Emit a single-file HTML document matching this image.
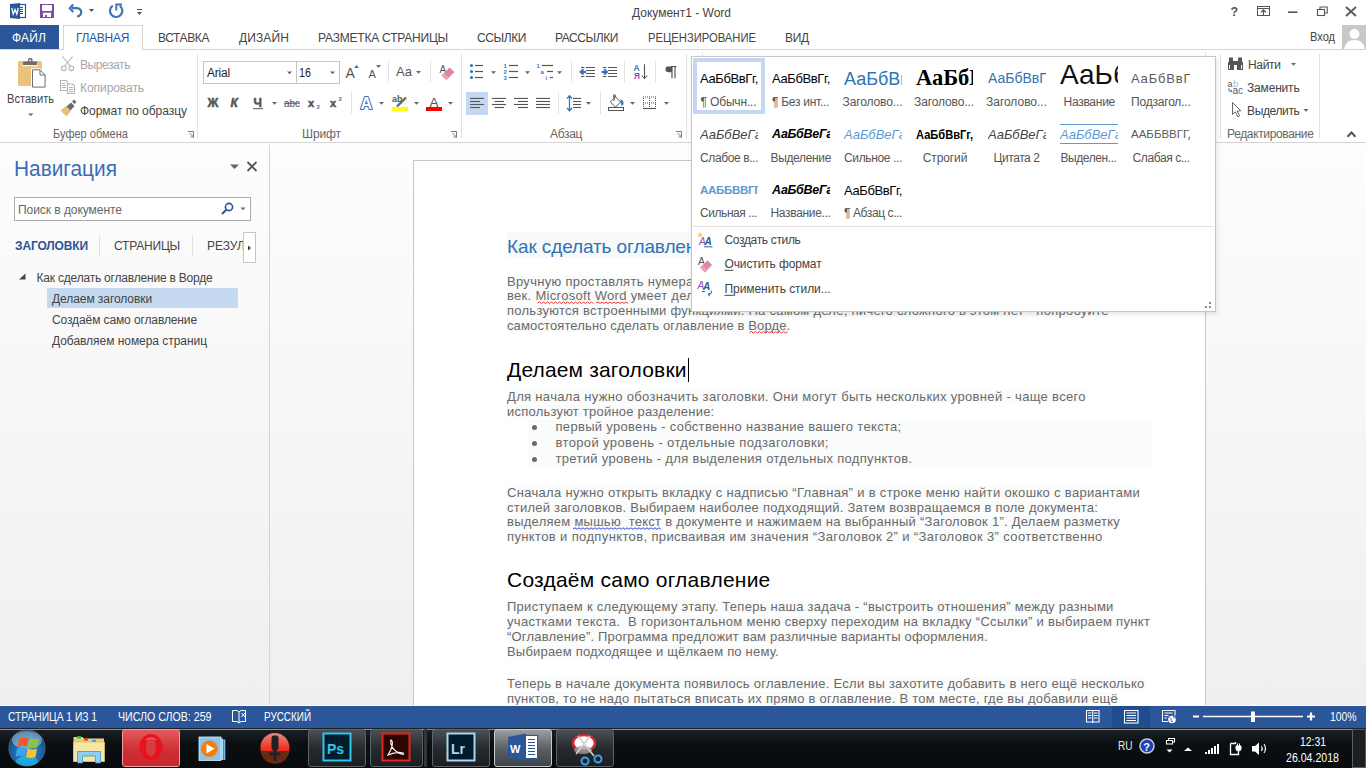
<!DOCTYPE html>
<html><head><meta charset="utf-8"><title>Word</title>
<style>
*{margin:0;padding:0;box-sizing:border-box}
html,body{width:1366px;height:768px;overflow:hidden;background:#fff;font-family:"Liberation Sans",sans-serif;position:relative}
.a{position:absolute}
.t{position:absolute;white-space:pre;font-family:"Liberation Sans",sans-serif}
</style></head><body>
<div class="a" style="left:0;top:143px;width:1366px;height:563px;background:linear-gradient(#fdfdfd,#efefef);"></div>
<div class="a" style="left:269px;top:145px;width:1px;height:559px;background:#d4d4d4"></div>
<div class="a" style="left:413px;top:160px;width:793px;height:546px;background:#fff;border:1px solid #c6c6c6;border-bottom:none"></div>
<div class="a" style="left:0;top:706px;width:1366px;height:22px;background:#2b579a;z-index:5"></div>
<div class="a" style="left:0;top:705px;width:1366px;height:1px;background:#fbfbf8;z-index:5"></div>
<!-- p1_chrome -->
<svg class="a" style="left:0;top:0" width="150" height="24" viewBox="0 0 150 24">
<path d="M10 4 L20 3 L20 19 L10 18 Z" fill="#2b579a"/>
<rect x="19.5" y="4.5" width="6" height="13" fill="#fff" stroke="#2b579a" stroke-width="1.2"/>
<path d="M20 7.5h3M20 9.5h3M20 11.5h3M20 13.5h3" stroke="#2b579a" stroke-width="1"/>
<path d="M11.8 8 L13.2 14 L15 9.5 L16.8 14 L18.2 8" fill="none" stroke="#fff" stroke-width="1.3"/>
<rect x="40" y="4" width="14" height="14" fill="#7d4aa5"/>
<rect x="42" y="5" width="10" height="6" rx="1" fill="#fff"/>
<rect x="43" y="12.7" width="8" height="4.3" fill="#fff"/>
<rect x="45" y="15" width="2" height="2" fill="#7d4aa5"/>
<path d="M72 8.2 H77 A5 4.2 0 0 1 77 16.5" fill="none" stroke="#3e76b5" stroke-width="2.2"/>
<path d="M73.2 4.5 L69.8 8.2 L73.2 11.9" fill="none" stroke="#3e76b5" stroke-width="2.2"/>
<path d="M89 9 H94 L91.5 12 Z" fill="#555"/>
<path d="M112.8 5.6 A6.2 6.2 0 1 0 119.8 5.8" fill="none" stroke="#3e76b5" stroke-width="2.2"/>
<path d="M116.3 10.5 V4.6 H122" fill="none" stroke="#3e76b5" stroke-width="2"/>
<path d="M137 9.5 H142" stroke="#555" stroke-width="1"/>
<path d="M137 12 H142 L139.5 15 Z" fill="#555"/>
</svg>
<div class="t" style="left:632px;top:7px;font-size:12px;line-height:12px;color:#444;">Документ1 - Word</div>
<svg class="a" style="left:1220px;top:0" width="146" height="25" viewBox="1220 0 146 25">
<text x="1230.5" y="16.3" font-family="Liberation Sans" font-weight="bold" font-size="12.5" fill="#555">?</text>
<rect x="1257.5" y="6.5" width="12" height="9" fill="none" stroke="#555" stroke-width="1"/>
<path d="M1257.5 8.5h12" stroke="#555" stroke-width="1"/>
<path d="M1263.5 15v-5M1261 12.3l2.5-2.5 2.5 2.5" fill="none" stroke="#555" stroke-width="1.1"/>
<path d="M1288 12.2h9.5" stroke="#555" stroke-width="1.6"/>
<rect x="1317.5" y="9.5" width="7" height="6" fill="none" stroke="#555" stroke-width="1.1"/>
<path d="M1320 9.5V7h7.2v6h-2.5" fill="none" stroke="#555" stroke-width="1.1"/>
<path d="M1346 7l10 9M1356 7l-10 9" stroke="#555" stroke-width="1.7"/>
</svg>
<div class="t" style="left:1310px;top:31px;font-size:12px;line-height:12px;color:#444;transform:scaleX(0.9206);transform-origin:0 0;">Вход</div>
<div class="a" style="left:1342px;top:25px;width:24px;height:24px;background:#c8c8c8;overflow:hidden">
<svg width="24" height="24" viewBox="0 0 24 24"><circle cx="12.5" cy="9" r="5" fill="#fff"/><path d="M2 25 Q3 15 12.5 15 Q22 15 23 25Z" fill="#fff"/></svg></div>
<div class="a" style="left:0;top:25px;width:59px;height:25px;background:#2b579a"></div>
<div class="a" style="left:63px;top:25px;width:80px;height:25px;background:#fff;border:1px solid #d4d4d4;border-bottom:none;z-index:2"></div>
<div class="a" style="left:0;top:49px;width:1366px;height:1px;background:#d4d4d4;z-index:1"></div>
<div class="a" style="left:64px;top:49px;width:78px;height:1px;background:#fff;z-index:3"></div>
<div class="t" style="left:12px;top:32px;font-size:12px;line-height:12px;color:#fff;letter-spacing:0.16px;z-index:4;">ФАЙЛ</div>
<div class="t" style="left:76px;top:32px;font-size:12px;line-height:12px;color:#2b579a;letter-spacing:-0.29px;z-index:4;">ГЛАВНАЯ</div>
<div class="t" style="left:158px;top:32px;font-size:12px;line-height:12px;color:#444;letter-spacing:-0.40px;z-index:4;">ВСТАВКА</div>
<div class="t" style="left:239px;top:32px;font-size:12px;line-height:12px;color:#444;letter-spacing:0.12px;z-index:4;">ДИЗАЙН</div>
<div class="t" style="left:318px;top:32px;font-size:12px;line-height:12px;color:#444;letter-spacing:-0.21px;z-index:4;">РАЗМЕТКА СТРАНИЦЫ</div>
<div class="t" style="left:477px;top:32px;font-size:12px;line-height:12px;color:#444;letter-spacing:-0.41px;z-index:4;">ССЫЛКИ</div>
<div class="t" style="left:555px;top:32px;font-size:12px;line-height:12px;color:#444;letter-spacing:-0.42px;z-index:4;">РАССЫЛКИ</div>
<div class="t" style="left:648px;top:32px;font-size:12px;line-height:12px;color:#444;transform:scaleX(0.9358);transform-origin:0 0;z-index:4;">РЕЦЕНЗИРОВАНИЕ</div>
<div class="t" style="left:785px;top:32px;font-size:12px;line-height:12px;color:#444;letter-spacing:-0.26px;z-index:4;">ВИД</div>
<div class="a" style="left:0;top:142px;width:1366px;height:1px;background:#d4d4d4"></div>
<!-- p2_ribbon -->
<div class="a" style="left:197px;top:54px;width:1px;height:84px;background:#e1e1e1"></div>
<div class="a" style="left:461px;top:54px;width:1px;height:84px;background:#e1e1e1"></div>
<div class="a" style="left:686px;top:54px;width:1px;height:84px;background:#e1e1e1"></div>
<div class="a" style="left:1220px;top:54px;width:1px;height:84px;background:#e1e1e1"></div>
<div class="a" style="left:1319px;top:54px;width:1px;height:84px;background:#e1e1e1"></div>
<svg class="a" style="left:0;top:50px" width="200" height="92" viewBox="0 50 200 92">
<rect x="18" y="61" width="24" height="25" rx="1.5" fill="#eac27b"/>
<path d="M23 65 V62.5 Q23 61.5 24.5 61.5 H28 V59.5 Q28 58 29.5 58 H31 Q32.5 58 32.5 59.5 V61.5 H36 Q37 61.5 37 62.5 V65 Z" fill="#6d6d6d"/>
<rect x="29.3" y="59.6" width="1.8" height="1.6" fill="#fff"/>
<path d="M22 65.7 H38" stroke="#fff" stroke-width="1"/>
<path d="M31 68.3 H40.5 L46.6 74.4 V88.6 H31 Z" fill="#fff"/>
<path d="M32.5 69.8 H40 L45.1 75 V87.1 H32.5 Z" fill="#fff" stroke="#6d6d6d" stroke-width="1"/>
<path d="M40 69.8 V75 H45.1" fill="none" stroke="#6d6d6d" stroke-width="1"/>
<path d="M28 113.5 H33.5 L30.75 116 Z" fill="#666"/>
<g stroke="#b4b4b4" stroke-width="1.1" fill="none">
<path d="M62.5 56.5 L70.2 66 M72.5 56.5 L64.8 66"/>
<circle cx="63.8" cy="68.3" r="2.3"/><circle cx="71.4" cy="68.3" r="2.3"/>
<path d="M60.5 80.5 H66 L67.5 82 V90.5 H60.5 Z" fill="#fff"/><path d="M62 83.5h3M62 85.5h4M62 87.5h4"/>
<path d="M67.5 84 H72.5 L74.5 86 V93.5 H67.5 Z" fill="#fff"/><path d="M69 87.5h4M69 89.5h4M69 91.5h4"/>
</g>
<path d="M60.5 110.5 L66 106 L71 111 L66.5 116.5 Z" fill="#e8bf7a"/>
<path d="M66.5 106.5 L71 102.5 L74.5 106 L70.5 110.5 Z" fill="#6a6a6a"/>
<path d="M72 101.5 L74 99.5 L76.5 102 L74.5 104 Z" fill="#6a6a6a"/>
<path d="M188 131.5 H193.5 V137.5 M189.5 133 L193 136.5 M190.5 137 H193.5 V134" fill="none" stroke="#777" stroke-width="1"/>
</svg>
<div class="t" style="left:7px;top:93px;font-size:12px;line-height:12px;color:#444;transform:scaleX(0.9238);transform-origin:0 0;">Вставить</div>
<div class="t" style="left:80px;top:59px;font-size:12px;line-height:12px;color:#a6a6a6;letter-spacing:-0.42px;">Вырезать</div>
<div class="t" style="left:80px;top:82px;font-size:12px;line-height:12px;color:#a6a6a6;letter-spacing:-0.06px;">Копировать</div>
<div class="t" style="left:80px;top:105px;font-size:12px;line-height:12px;color:#444;letter-spacing:-0.04px;">Формат по образцу</div>
<div class="t" style="left:53px;top:127.69999999999999px;font-size:12px;line-height:12px;color:#666;transform:scaleX(0.9197);transform-origin:0 0;">Буфер обмена</div>
<div class="a" style="left:203px;top:61px;width:137px;height:23px;border:1px solid #c6c6c6;background:#fff"></div>
<div class="a" style="left:296px;top:61px;width:1px;height:23px;background:#c6c6c6"></div>
<div class="t" style="left:207px;top:67px;font-size:12px;line-height:12px;color:#262626;letter-spacing:-0.20px;">Arial</div>
<div class="t" style="left:299px;top:67px;font-size:12px;line-height:12px;color:#262626;transform:scaleX(0.8982);transform-origin:0 0;">16</div>
<svg class="a" style="left:197px;top:50px" width="265" height="92" viewBox="197 50 265 92">
<path d="M287 71.5h5l-2.5 2.8z M330 71.5h5l-2.5 2.8z" fill="#666"/>
<text x="345.6" y="78" font-family="Liberation Sans" font-size="14" fill="#555">A</text>
<path d="M354 68 L356.5 65 L359 68 Z" fill="#3b73b9"/>
<text x="368.6" y="78" font-family="Liberation Sans" font-size="11" fill="#555">A</text>
<path d="M376 65 H381 L378.5 68 Z" fill="#3b73b9"/>
<path d="M388.5 61v21.5 M430.5 61v21.5 M351.5 92v21.5" stroke="#e1e1e1" stroke-width="1"/>
<text x="396" y="76.2" font-family="Liberation Sans" font-size="13" fill="#555">Aa</text>
<path d="M416 71h5l-2.5 2.8z" fill="#666"/>
<text x="439.5" y="73" font-family="Liberation Sans" font-size="10" fill="#555">A</text>
<path d="M441.5 75.5 L449.5 67.5 L454.5 72 L446.5 80 Z" fill="#e3869a"/>
<path d="M441.5 75.5 L444 73 L449 77.5 L446.5 80 Z" fill="#e6a3b1"/>
<text x="207.5" y="106.7" font-family="Liberation Sans" font-weight="bold" font-size="12" fill="#555" stroke="#555" stroke-width="0.5">Ж</text>
<text x="230.5" y="106.7" font-family="Liberation Sans" font-weight="bold" font-style="italic" font-size="12" fill="#555" stroke="#555" stroke-width="0.5">К</text>
<text x="253.5" y="106.7" font-family="Liberation Sans" font-weight="bold" font-size="12" fill="#555" stroke="#555" stroke-width="0.5">Ч</text>
<path d="M253 108.7h10" stroke="#555" stroke-width="1"/>
<path d="M272 102h5l-2.5 2.8z" fill="#666"/>
<text x="284" y="106.7" font-family="Liberation Sans" font-size="10" fill="#555" textLength="16" lengthAdjust="spacingAndGlyphs">abc</text>
<path d="M284 103.2h16" stroke="#555" stroke-width="1"/>
<text x="308" y="106.7" font-family="Liberation Sans" font-weight="bold" font-size="11" fill="#555" stroke="#555" stroke-width="0.5">x</text>
<text x="316.5" y="108.8" font-family="Liberation Sans" font-weight="bold" font-size="6" fill="#3b73b9">2</text>
<text x="330" y="106.7" font-family="Liberation Sans" font-weight="bold" font-size="11" fill="#555" stroke="#555" stroke-width="0.5">x</text>
<text x="338.5" y="100.8" font-family="Liberation Sans" font-weight="bold" font-size="6" fill="#3b73b9">2</text>
<text x="360.5" y="108.5" font-family="Liberation Sans" font-weight="bold" font-size="16" fill="#fff" stroke="#3b73b9" stroke-width="2.2" paint-order="stroke" stroke-linejoin="round">A</text>
<path d="M379 102h5l-2.5 2.8z M414 102h5l-2.5 2.8z M448 102h5l-2.5 2.8z" fill="#666"/>
<text x="392" y="101.7" font-family="Liberation Sans" font-weight="bold" font-size="9" fill="#555">ab</text>
<path d="M397 106.5 L406 97.5" stroke="#666" stroke-width="2.4"/>
<rect x="392" y="107" width="16" height="4" fill="#ffff00"/>
<text x="429.5" y="106.7" font-family="Liberation Sans" font-size="13.5" fill="#555">A</text>
<rect x="426" y="107" width="16" height="4" fill="#ff0000"/>
<path d="M451 131.5 H456.5 V137.5 M452.5 133 L456 136.5 M453.5 137 H456.5 V134" fill="none" stroke="#777" stroke-width="1"/>
</svg>
<div class="t" style="left:302px;top:127.69999999999999px;font-size:12px;line-height:12px;color:#666;letter-spacing:-0.10px;">Шрифт</div>
<!-- p3_para -->
<svg class="a" style="left:461px;top:50px" width="226" height="92" viewBox="461 50 226 92"><circle cx="471.5" cy="65.5" r="1.6" fill="#3b73b9"/><path d="M475 65.5H483" stroke="#555" stroke-width="1.2"/><circle cx="471.5" cy="71.5" r="1.6" fill="#3b73b9"/><path d="M475 71.5H483" stroke="#555" stroke-width="1.2"/><circle cx="471.5" cy="77.5" r="1.6" fill="#3b73b9"/><path d="M475 77.5H483" stroke="#555" stroke-width="1.2"/><path d="M491.0 71.2h5l-2.5 2.8z" fill="#666"/><text x="503.5" y="67.8" font-family="Liberation Sans" font-weight="bold" font-size="6" fill="#3b73b9">1</text><path d="M509 65.5H518" stroke="#555" stroke-width="1.2"/><text x="503.5" y="73.8" font-family="Liberation Sans" font-weight="bold" font-size="6" fill="#3b73b9">2</text><path d="M509 71.5H518" stroke="#555" stroke-width="1.2"/><text x="503.5" y="79.8" font-family="Liberation Sans" font-weight="bold" font-size="6" fill="#3b73b9">3</text><path d="M509 77.5H518" stroke="#555" stroke-width="1.2"/><path d="M525.0 71.2h5l-2.5 2.8z" fill="#666"/><text x="536.5" y="67.8" font-family="Liberation Sans" font-weight="bold" font-size="6" fill="#3b73b9">1</text><path d="M542 65.5H553" stroke="#555" stroke-width="1.2"/><text x="540.5" y="73.8" font-family="Liberation Sans" font-weight="bold" font-size="6" fill="#3b73b9">a</text><path d="M547 71.5H553" stroke="#555" stroke-width="1.2"/><text x="545.5" y="79.8" font-family="Liberation Sans" font-weight="bold" font-size="6" fill="#3b73b9">i</text><path d="M550 77.5H553" stroke="#555" stroke-width="1.2"/><path d="M557.0 71.2h5l-2.5 2.8z" fill="#666"/><path d="M571.5 61.0V82.5" stroke="#e1e1e1" stroke-width="1"/><path d="M624.5 61.0V82.5" stroke="#e1e1e1" stroke-width="1"/><path d="M655.5 61.0V82.5" stroke="#e1e1e1" stroke-width="1"/><path d="M558.5 92.0V114.0" stroke="#e1e1e1" stroke-width="1"/><path d="M600.5 92.0V114.0" stroke="#e1e1e1" stroke-width="1"/><path d="M581 67.5h3.5M586 67.5h9M586 70.5h9M586 73.5h9M581 76.5h3.5M586 76.5h9" stroke="#555" stroke-width="1"/><path d="M603 67.5h3.5M608 67.5h9M608 70.5h9M608 73.5h9M603 76.5h3.5M608 76.5h9" stroke="#555" stroke-width="1"/><path d="M586 71.9H581.5M583.5 69.2L580.5 71.9L583.5 74.6" fill="none" stroke="#3b73b9" stroke-width="2"/><path d="M601.5 71.9H606M604 69.2L607 71.9L604 74.6" fill="none" stroke="#3b73b9" stroke-width="2"/><text x="633.5" y="70.8" font-family="Liberation Sans" font-weight="bold" font-size="8.5" fill="#3b73b9">A</text><text x="633.8" y="79" font-family="Liberation Sans" font-weight="bold" font-size="8.5" fill="#8a4fb5">Я</text><path d="M644.5 64.2V78.5M641.8 75.5L644.5 78.5L647.2 75.5" fill="none" stroke="#555" stroke-width="1.1"/><path d="M672 66.5 H667.5 Q665.5 66.5 665.5 69.3 Q665.5 72.2 668.5 72.2 H672 Z" fill="#555"/><path d="M672 66 V78.3 M675 66 V78.3 M671 66.5 H676.5" stroke="#555" stroke-width="1.2"/><rect x="466" y="92" width="22" height="23" fill="#c5d7f2"/><path d="M470.0 98.4H484.0" stroke="#555" stroke-width="1.1"/><path d="M470.0 101.5H480.0" stroke="#555" stroke-width="1.1"/><path d="M470.0 104.5H484.0" stroke="#555" stroke-width="1.1"/><path d="M470.0 107.5H480.0" stroke="#555" stroke-width="1.1"/><path d="M492.0 98.4H506.0" stroke="#555" stroke-width="1.1"/><path d="M494.5 101.5H504.0" stroke="#555" stroke-width="1.1"/><path d="M492.0 104.5H506.0" stroke="#555" stroke-width="1.1"/><path d="M494.5 107.5H504.0" stroke="#555" stroke-width="1.1"/><path d="M514.0 98.4H528.0" stroke="#555" stroke-width="1.1"/><path d="M518.0 101.5H528.0" stroke="#555" stroke-width="1.1"/><path d="M514.0 104.5H528.0" stroke="#555" stroke-width="1.1"/><path d="M518.0 107.5H528.0" stroke="#555" stroke-width="1.1"/><path d="M536.0 98.4H550.0" stroke="#555" stroke-width="1.1"/><path d="M536.0 101.5H550.0" stroke="#555" stroke-width="1.1"/><path d="M536.0 104.5H550.0" stroke="#555" stroke-width="1.1"/><path d="M536.0 107.5H550.0" stroke="#555" stroke-width="1.1"/><path d="M569.5 96V110.5M567 98.5L569.5 95.8L572 98.5M567 108L569.5 110.7L572 108" fill="none" stroke="#3b73b9" stroke-width="1.3"/><path d="M573 98.4H581" stroke="#555" stroke-width="1.1"/><path d="M573 101.5H581" stroke="#555" stroke-width="1.1"/><path d="M573 104.5H581" stroke="#555" stroke-width="1.1"/><path d="M573 107.5H581" stroke="#555" stroke-width="1.1"/><path d="M586.0 101.9h5l-2.5 2.8z" fill="#666"/><path d="M610.3 102 L615.5 96.8 L620.7 102 L615.5 107.2 Z" fill="#fff" stroke="#555" stroke-width="1"/><path d="M614 95.5V101" stroke="#555" stroke-width="1"/><rect x="613.5" y="95" width="2" height="2" fill="none" stroke="#555" stroke-width="0.8"/><path d="M620.5 99.5 Q624 100 623.5 104.5 L621.5 106 Z" fill="#3b73b9"/><rect x="608.5" y="107.5" width="15" height="3" fill="#fff" stroke="#555" stroke-width="1"/><path d="M630.0 101.9h5l-2.5 2.8z" fill="#666"/><g fill="#555"><rect x="643" y="96.5" width="1" height="1"/><rect x="645" y="96.5" width="1" height="1"/><rect x="647" y="96.5" width="1" height="1"/><rect x="649" y="96.5" width="1" height="1"/><rect x="651" y="96.5" width="1" height="1"/><rect x="653" y="96.5" width="1" height="1"/><rect x="655" y="96.5" width="1" height="1"/><rect x="643" y="102.5" width="1" height="1"/><rect x="645" y="102.5" width="1" height="1"/><rect x="647" y="102.5" width="1" height="1"/><rect x="649" y="102.5" width="1" height="1"/><rect x="651" y="102.5" width="1" height="1"/><rect x="653" y="102.5" width="1" height="1"/><rect x="655" y="102.5" width="1" height="1"/><rect x="643" y="98" width="1" height="1"/><rect x="649" y="98" width="1" height="1"/><rect x="655" y="98" width="1" height="1"/><rect x="643" y="100" width="1" height="1"/><rect x="649" y="100" width="1" height="1"/><rect x="655" y="100" width="1" height="1"/><rect x="643" y="102" width="1" height="1"/><rect x="649" y="102" width="1" height="1"/><rect x="655" y="102" width="1" height="1"/><rect x="643" y="104" width="1" height="1"/><rect x="649" y="104" width="1" height="1"/><rect x="655" y="104" width="1" height="1"/><rect x="643" y="106" width="1" height="1"/><rect x="649" y="106" width="1" height="1"/><rect x="655" y="106" width="1" height="1"/></g><path d="M643 108.5H656" stroke="#555" stroke-width="1.1"/><path d="M664.0 101.9h5l-2.5 2.8z" fill="#666"/><path d="M676 131.5 H681.5 V137.5 M677.5 133 L681 136.5 M678.5 137 H681.5 V134" fill="none" stroke="#777" stroke-width="1"/></svg>
<div class="t" style="left:550px;top:127.69999999999999px;font-size:12px;line-height:12px;color:#666;letter-spacing:-0.33px;">Абзац</div>
<svg class="a" style="left:1220px;top:50px" width="146" height="92" viewBox="1220 50 146 92"><g fill="#555"><rect x="1228" y="62" width="6" height="8" rx="0.5"/><rect x="1237" y="62" width="6" height="8" rx="0.5"/>
<rect x="1229" y="57.5" width="4" height="5"/><rect x="1238" y="57.5" width="4" height="5"/><rect x="1233" y="61" width="5" height="4"/></g>
<g fill="#fff"><rect x="1229" y="65" width="1" height="4"/><rect x="1241" y="65" width="1" height="4"/></g><text x="1227.5" y="86.6" font-family="Liberation Sans" font-size="9" fill="#555">a</text><text x="1233.3" y="86.6" font-family="Liberation Sans" font-size="9" fill="#b5b5b5">b</text><text x="1232.5" y="93.5" font-family="Liberation Sans" font-size="10" fill="#555">a</text><text x="1238" y="93.5" font-family="Liberation Sans" font-size="10" fill="#3b73b9">c</text><path d="M1229 88V91H1232M1230.5 89.8L1232 91L1230.5 92.2" fill="none" stroke="#3b73b9" stroke-width="0.9"/><path d="M1232.5 102.5 V114.5 L1235.3 111.8 L1237.8 116.8 L1239.6 115.8 L1237.2 111 L1240.8 110.8 Z" fill="#fff" stroke="#555" stroke-width="0.9"/><path d="M1291.0 63.0h5l-2.5 2.8z" fill="#666"/><path d="M1303.5 109.0h5l-2.5 2.8z" fill="#666"/><path d="M1347.5 136.8L1351.5 132.5L1355.5 136.8" fill="none" stroke="#555" stroke-width="2"/></svg>
<div class="t" style="left:1248px;top:59px;font-size:12px;line-height:12px;color:#444;letter-spacing:-0.35px;">Найти</div>
<div class="t" style="left:1247px;top:82px;font-size:12px;line-height:12px;color:#444;letter-spacing:-0.18px;">Заменить</div>
<div class="t" style="left:1247px;top:105px;font-size:12px;line-height:12px;color:#444;letter-spacing:-0.36px;">Выделить</div>
<div class="t" style="left:1227px;top:127.69999999999999px;font-size:12px;line-height:12px;color:#666;letter-spacing:-0.35px;">Редактирование</div>
<!-- p4_popup -->
<div class="a" style="left:691px;top:56px;width:525px;height:256px;background:#fff;border:1px solid #c6c6c6;box-shadow:1px 2px 5px rgba(0,0,0,0.10);z-index:10"></div>
<div class="a" style="left:702px;top:52px;width:1px;height:4px;background:#e3e3e3"></div>
<div class="a" style="left:1205px;top:52px;width:1px;height:4px;background:#e3e3e3"></div>
<div class="a" style="left:693px;top:58px;width:72px;height:56px;border:4px solid #c5d6f0;z-index:11"></div>
<div class="t" style="left:700px;top:72px;font-size:13px;line-height:13px;color:#000;letter-spacing:-0.38px;z-index:12;">АаБбВвГг,</div>
<div class="t" style="left:772px;top:72px;font-size:13px;line-height:13px;color:#000;letter-spacing:-0.38px;z-index:12;">АаБбВвГг,</div>
<div class="t" style="left:844px;top:70px;font-size:18px;line-height:18px;color:#2e74b5;z-index:12;width:58px;overflow:hidden;">АаБбВвГг</div>
<div class="t" style="left:916px;top:67px;font-size:22.5px;line-height:22.5px;color:#000;font-weight:bold;font-family:'Liberation Serif',serif;z-index:12;width:57px;overflow:hidden;">АаБбВвГг</div>
<div class="t" style="left:988px;top:71px;font-size:14px;line-height:14px;color:#2e74b5;z-index:12;width:58px;overflow:hidden;">АаБбВвГг</div>
<div class="t" style="left:1060px;top:61px;font-size:28px;line-height:28px;color:#111;z-index:12;width:58px;overflow:hidden;">АаЬбВвГг</div>
<div class="t" style="left:1131px;top:72px;font-size:13px;line-height:13px;color:#5a5a5a;z-index:12;width:59px;overflow:hidden;letter-spacing:0.8px;">АаБбВвГг</div>
<div class="t" style="left:700.5px;top:96px;font-size:12px;line-height:12px;color:#555;letter-spacing:-0.15px;z-index:12;">¶ Обычн...</div>
<div class="t" style="left:772px;top:96px;font-size:12px;line-height:12px;color:#555;letter-spacing:-0.28px;z-index:12;">¶ Без инт...</div>
<div class="t" style="left:842.5px;top:96px;font-size:12px;line-height:12px;color:#555;letter-spacing:-0.11px;z-index:12;">Заголово...</div>
<div class="t" style="left:914px;top:96px;font-size:12px;line-height:12px;color:#555;letter-spacing:-0.11px;z-index:12;">Заголово...</div>
<div class="t" style="left:986px;top:96px;font-size:12px;line-height:12px;color:#555;letter-spacing:-0.02px;z-index:12;">Заголово...</div>
<div class="t" style="left:1063.5px;top:96px;font-size:12px;line-height:12px;color:#555;letter-spacing:-0.27px;z-index:12;">Название</div>
<div class="t" style="left:1131px;top:96px;font-size:12px;line-height:12px;color:#555;letter-spacing:-0.20px;z-index:12;">Подзагол...</div>
<div class="t" style="left:700px;top:128px;font-size:13px;line-height:13px;color:#444;font-style:italic;z-index:12;width:58px;overflow:hidden;">АаБбВеГг</div>
<div class="t" style="left:772px;top:128px;font-size:12.5px;line-height:12.5px;color:#000;font-weight:bold;font-style:italic;z-index:12;width:58px;overflow:hidden;letter-spacing:-0.3px;">АаБбВеГг</div>
<div class="t" style="left:844px;top:128px;font-size:13px;line-height:13px;color:#5b9bd5;font-style:italic;z-index:12;width:58px;overflow:hidden;">АаБбВеГг</div>
<div class="t" style="left:916px;top:129.4px;font-size:12px;line-height:12px;color:#000;transform:scaleX(0.9245);transform-origin:0 0;font-weight:bold;z-index:12;">АаБбВвГг,</div>
<div class="t" style="left:988px;top:128px;font-size:13px;line-height:13px;color:#444;font-style:italic;z-index:12;width:58px;overflow:hidden;">АаБбВеГг</div>
<div class="t" style="left:1060px;top:128px;font-size:13px;line-height:13px;color:#5b9bd5;font-style:italic;z-index:12;width:58px;overflow:hidden;">АаБбВеГг</div>
<div class="a" style="left:1060px;top:124px;width:58px;height:1px;background:#5b9bd5;z-index:12"></div>
<div class="a" style="left:1060px;top:143px;width:58px;height:1px;background:#5b9bd5;z-index:12"></div>
<div class="t" style="left:1131px;top:129.3px;font-size:11.5px;line-height:11.5px;color:#5a5a5a;z-index:12;width:59px;overflow:hidden;">ААББВВГГД</div>
<div class="t" style="left:700px;top:152px;font-size:12px;line-height:12px;color:#555;letter-spacing:-0.39px;z-index:12;">Слабое в...</div>
<div class="t" style="left:770.5px;top:152px;font-size:12px;line-height:12px;color:#555;letter-spacing:-0.34px;z-index:12;">Выделение</div>
<div class="t" style="left:844px;top:152px;font-size:12px;line-height:12px;color:#555;letter-spacing:-0.36px;z-index:12;">Сильное ...</div>
<div class="t" style="left:922.7px;top:152px;font-size:12px;line-height:12px;color:#555;letter-spacing:-0.09px;z-index:12;">Строгий</div>
<div class="t" style="left:993.5px;top:152px;font-size:12px;line-height:12px;color:#555;letter-spacing:-0.43px;z-index:12;">Цитата 2</div>
<div class="t" style="left:1060.5px;top:152px;font-size:12px;line-height:12px;color:#555;letter-spacing:-0.42px;z-index:12;">Выделен...</div>
<div class="t" style="left:1132.6px;top:152px;font-size:12px;line-height:12px;color:#555;letter-spacing:-0.40px;z-index:12;">Слабая с...</div>
<div class="t" style="left:700px;top:185px;font-size:11.5px;line-height:11.5px;color:#5b9bd5;font-weight:bold;z-index:12;width:58px;overflow:hidden;letter-spacing:-0.3px;">ААББВВГГ,</div>
<div class="t" style="left:772px;top:184px;font-size:12.5px;line-height:12.5px;color:#000;font-weight:bold;font-style:italic;z-index:12;width:58px;overflow:hidden;letter-spacing:-0.3px;">АаБбВеГг</div>
<div class="t" style="left:844px;top:184px;font-size:13px;line-height:13px;color:#000;letter-spacing:-0.38px;z-index:12;">АаБбВвГг,</div>
<div class="t" style="left:700px;top:207px;font-size:12px;line-height:12px;color:#555;letter-spacing:-0.43px;z-index:12;">Сильная ...</div>
<div class="t" style="left:770.5px;top:207px;font-size:12px;line-height:12px;color:#555;letter-spacing:-0.33px;z-index:12;">Название...</div>
<div class="t" style="left:844px;top:207px;font-size:12px;line-height:12px;color:#555;letter-spacing:-0.40px;z-index:12;">¶ Абзац с...</div>
<div class="a" style="left:693px;top:226px;width:521px;height:1px;background:#e1e1e1;z-index:12"></div>
<div class="t" style="left:724.5px;top:234px;font-size:12px;line-height:12px;color:#444;letter-spacing:-0.34px;z-index:12;">Создать стиль</div>
<div class="t" style="left:724.5px;top:258px;font-size:12px;line-height:12px;color:#444;letter-spacing:-0.13px;z-index:12;">Очистить формат</div>
<div class="t" style="left:724.5px;top:283px;font-size:12px;line-height:12px;color:#444;letter-spacing:-0.07px;z-index:12;">Применить стили...</div>
<svg class="a" style="left:691px;top:226px;z-index:12" width="525" height="86" viewBox="691 226 525 86">
<path d="M741 246.3h4.5M724.5 270.3h9M724.5 295.3h9" stroke="#444" stroke-width="1"/>
<g stroke="#f0c24a" stroke-width="0.9"><path d="M700 232.5v5M697.5 235h5M698.2 233.2l3.6 3.6M701.8 233.2l-3.6 3.6"/></g>
<text x="699" y="245" font-family="Liberation Sans" font-style="italic" font-size="10" fill="#8a4fb5">A</text>
<text x="704.5" y="245" font-family="Liberation Sans" font-weight="bold" font-style="italic" font-size="10" fill="#2b579a">A</text>
<path d="M704 246.8h8.5" stroke="#2b579a" stroke-width="1"/>
<text x="698" y="265" font-family="Liberation Sans" font-size="10.5" fill="#555">A</text>
<path d="M700 267.5 L707.5 260 L712.5 265 L705 272.5 Z" fill="#e3869a" stroke="#fff" stroke-width="0.6"/>
<path d="M700 267.5 L702.5 265 L707.5 270 L705 272.5 Z" fill="#eaa0b0"/>
<text x="697.5" y="289" font-family="Liberation Sans" font-style="italic" font-size="10" fill="#8a4fb5">A</text>
<text x="703" y="290" font-family="Liberation Sans" font-weight="bold" font-style="italic" font-size="10" fill="#2b579a">A</text>
<path d="M702 291.5h3M711 290.5 Q713 294 708 294.5M710 292.8l-2 1.7 2 1.7" fill="none" stroke="#2b579a" stroke-width="1"/>
<g fill="#8a8a8a"><rect x="1209" y="302" width="2" height="2"/><rect x="1209" y="306" width="2" height="2"/><rect x="1205" y="306" width="2" height="2"/></g>
</svg>
<!-- p5_nav -->
<div class="t" style="left:13.5px;top:157.5px;font-size:22px;line-height:22px;color:#3b6cb3;transform:scaleX(0.9477);transform-origin:0 0;">Навигация</div>
<svg class="a" style="left:200px;top:150px" width="69" height="30" viewBox="200 150 69 30">
<path d="M230 164.5h9l-4.5 4.5z" fill="#666"/>
<path d="M247.5 162l9 9M256.5 162l-9 9" stroke="#555" stroke-width="1.8"/>
</svg>
<div class="a" style="left:14px;top:197px;width:237px;height:24px;border:1px solid #ababab;background:#fff"></div>
<svg class="a" style="left:214px;top:198px" width="36" height="22" viewBox="214 198 36 22">
<circle cx="229" cy="207" r="3.6" fill="none" stroke="#2b579a" stroke-width="1.6"/>
<path d="M226.5 209.5l-4.5 4.5" stroke="#2b579a" stroke-width="2"/>
<path d="M240.5 207.5h5l-2.5 2.8z" fill="#666"/></svg>
<div class="t" style="left:18px;top:204px;font-size:12px;line-height:12px;color:#666;letter-spacing:-0.05px;">Поиск в документе</div>
<div class="t" style="left:15px;top:240.3px;font-size:12px;line-height:12px;color:#2b579a;letter-spacing:-0.14px;font-weight:bold;">ЗАГОЛОВКИ</div>
<div class="a" style="left:99px;top:235px;width:1px;height:21px;background:#e1e1e1"></div>
<div class="t" style="left:114px;top:240.3px;font-size:12px;line-height:12px;color:#444;letter-spacing:-0.20px;">СТРАНИЦЫ</div>
<div class="a" style="left:192px;top:235px;width:1px;height:21px;background:#e1e1e1"></div>
<div class="t" style="left:207px;top:240.3px;font-size:12px;line-height:12px;color:#444;width:36px;overflow:hidden;">РЕЗУЛЬТАТЫ</div>
<svg class="a" style="left:240px;top:230px" width="20" height="36" viewBox="240 230 20 36">
<rect x="243.5" y="232.5" width="12" height="30" fill="#fff" stroke="#c6c6c6"/>
<path d="M248 245.5l3 2.5-3 2.5z" fill="#444"/></svg>
<svg class="a" style="left:15px;top:270px" width="15" height="15" viewBox="15 270 15 15">
<path d="M19 279.5 L25.5 273.5 V279.5 Z" fill="#444"/></svg>
<div class="t" style="left:36.5px;top:272px;font-size:12px;line-height:12px;color:#444;letter-spacing:-0.20px;">Как сделать оглавление в Ворде</div>
<div class="a" style="left:47px;top:288px;width:191px;height:20px;background:#c5d9f1"></div>
<div class="t" style="left:52px;top:293px;font-size:12px;line-height:12px;color:#444;letter-spacing:-0.07px;">Делаем заголовки</div>
<div class="t" style="left:52px;top:314px;font-size:12px;line-height:12px;color:#444;letter-spacing:-0.11px;">Создаём само оглавление</div>
<div class="t" style="left:52px;top:335px;font-size:12px;line-height:12px;color:#444;letter-spacing:-0.04px;">Добавляем номера страниц</div>
<!-- p6_doc -->
<div class="a" style="left:507px;top:232px;width:610px;height:26px;background:#f8f9fa"></div>
<div class="a" style="left:529px;top:420px;width:623px;height:47px;background:#fafbfb"></div>
<div class="t" style="left:507px;top:237px;font-size:19px;line-height:19px;color:#2e74b5;letter-spacing:-0.11px;">Как сделать оглавление в Ворде</div>
<div class="t" style="left:507px;top:274.5px;font-size:13px;line-height:13px;color:#6a6a6a;letter-spacing:0.3px;background:#fafbfb;">Вручную проставлять нумерацию страниц и названия разделов - прошлый</div>
<div class="t" style="left:507px;top:289.3px;font-size:13px;line-height:13px;color:#6a6a6a;letter-spacing:0.3px;background:#fafbfb;">век. Microsoft Word умеет делать это автоматически, но многие до сих пор не</div>
<div class="t" style="left:507px;top:304px;font-size:13px;line-height:13px;color:#6a6a6a;letter-spacing:0.26px;background:#fafbfb;">пользуются встроенными функциями. На самом деле, ничего сложного в этом нет - попробуйте</div>
<div class="t" style="left:507px;top:318.5px;font-size:13px;line-height:13px;color:#6a6a6a;letter-spacing:0.12px;background:#fafbfb;">самостоятельно сделать оглавление в Ворде.</div>
<div class="t" style="left:507px;top:358.5px;font-size:21px;line-height:21px;color:#000;letter-spacing:0.16px;">Делаем заголовки</div>
<div class="a" style="left:688px;top:358px;width:1px;height:24px;background:#000"></div>
<div class="t" style="left:507px;top:390px;font-size:13px;line-height:13px;color:#6a6a6a;letter-spacing:0.33px;background:#fafbfb;">Для начала нужно обозначить заголовки. Они могут быть нескольких уровней - чаще всего</div>
<div class="t" style="left:507px;top:404.5px;font-size:13px;line-height:13px;color:#6a6a6a;letter-spacing:0.22px;background:#fafbfb;">используют тройное разделение:</div>
<div class="t" style="left:555.5px;top:419.6px;font-size:13px;line-height:13px;color:#6a6a6a;letter-spacing:0.31px;">первый уровень - собственно название вашего текста;</div>
<div class="a" style="left:531.5px;top:425.0px;width:5px;height:5px;border-radius:2.5px;background:#6a6a6a"></div>
<div class="t" style="left:555.5px;top:435.5px;font-size:13px;line-height:13px;color:#6a6a6a;letter-spacing:0.37px;">второй уровень - отдельные подзаголовки;</div>
<div class="a" style="left:531.5px;top:440.9px;width:5px;height:5px;border-radius:2.5px;background:#6a6a6a"></div>
<div class="t" style="left:555.5px;top:451.5px;font-size:13px;line-height:13px;color:#6a6a6a;letter-spacing:0.32px;">третий уровень - для выделения отдельных подпунктов.</div>
<div class="a" style="left:531.5px;top:456.9px;width:5px;height:5px;border-radius:2.5px;background:#6a6a6a"></div>
<div class="t" style="left:507px;top:486px;font-size:13px;line-height:13px;color:#6a6a6a;letter-spacing:0.32px;background:#fafbfb;">Сначала нужно открыть вкладку с надписью “Главная” и в строке меню найти окошко с вариантами</div>
<div class="t" style="left:507px;top:500.7px;font-size:13px;line-height:13px;color:#6a6a6a;letter-spacing:0.22px;background:#fafbfb;">стилей заголовков. Выбираем наиболее подходящий. Затем возвращаемся в поле документа:</div>
<div class="t" style="left:507px;top:515.3px;font-size:13px;line-height:13px;color:#6a6a6a;letter-spacing:0.26px;background:#fafbfb;">выделяем мышью  текст в документе и нажимаем на выбранный “Заголовок 1”. Делаем разметку</div>
<div class="t" style="left:507px;top:530px;font-size:13px;line-height:13px;color:#6a6a6a;letter-spacing:0.37px;background:#fafbfb;">пунктов и подпунктов, присваивая им значения “Заголовок 2” и “Заголовок 3” соответственно</div>
<div class="t" style="left:507px;top:568.5px;font-size:21px;line-height:21px;color:#000;letter-spacing:0.23px;">Создаём само оглавление</div>
<div class="t" style="left:507px;top:600.3px;font-size:13px;line-height:13px;color:#6a6a6a;letter-spacing:0.27px;background:#fafbfb;">Приступаем к следующему этапу. Теперь наша задача - “выстроить отношения” между разными</div>
<div class="t" style="left:507px;top:615px;font-size:13px;line-height:13px;color:#6a6a6a;letter-spacing:0.31px;background:#fafbfb;">участками текста.  В горизонтальном меню сверху переходим на вкладку “Ссылки” и выбираем пункт</div>
<div class="t" style="left:507px;top:629.7px;font-size:13px;line-height:13px;color:#6a6a6a;letter-spacing:0.19px;background:#fafbfb;">“Оглавление”. Программа предложит вам различные варианты оформления.</div>
<div class="t" style="left:507px;top:644.5px;font-size:13px;line-height:13px;color:#6a6a6a;letter-spacing:0.19px;background:#fafbfb;">Выбираем подходящее и щёлкаем по нему.</div>
<div class="t" style="left:507px;top:677px;font-size:13px;line-height:13px;color:#6a6a6a;letter-spacing:0.25px;background:#fafbfb;">Теперь в начале документа появилось оглавление. Если вы захотите добавить в него ещё несколько</div>
<div class="t" style="left:507px;top:691.6px;font-size:13px;line-height:13px;color:#6a6a6a;letter-spacing:0.26px;background:#fafbfb;">пунктов, то не надо пытаться вписать их прямо в оглавление. В том месте, где вы добавили ещё</div>
<svg class="a" style="left:0;top:0" width="1366" height="706"><path d="M537.5 303.0 L539.5 302.0 L541.5 303.5 L543.5 302.0 L545.5 303.5 L547.5 302.0 L549.5 303.5 L551.5 302.0 L553.5 303.5 L555.5 302.0 L557.5 303.5 L559.5 302.0 L561.5 303.5 L563.5 302.0 L565.5 303.5 L567.5 302.0 L569.5 303.5 L571.5 302.0 L573.5 303.5 L575.5 302.0 L577.5 303.5 L579.5 302.0 L581.5 303.5 L583.5 302.0 L585.5 303.5 L587.5 302.0 L589.5 303.5 L591.5 302.0 L593.5 303.5" fill="none" stroke="#e02020" stroke-width="0.9"/><path d="M596.0 303.0 L598.0 302.0 L600.0 303.5 L602.0 302.0 L604.0 303.5 L606.0 302.0 L608.0 303.5 L610.0 302.0 L612.0 303.5 L614.0 302.0 L616.0 303.5 L618.0 302.0 L620.0 303.5 L622.0 302.0 L624.0 303.5 L626.0 302.0 L628.0 303.5" fill="none" stroke="#e02020" stroke-width="0.9"/><path d="M749.5 332.5 L751.5 331.5 L753.5 333.0 L755.5 331.5 L757.5 333.0 L759.5 331.5 L761.5 333.0 L763.5 331.5 L765.5 333.0 L767.5 331.5 L769.5 333.0 L771.5 331.5 L773.5 333.0 L775.5 331.5 L777.5 333.0 L779.5 331.5 L781.5 333.0 L783.5 331.5 L785.5 333.0 L787.5 331.5" fill="none" stroke="#e02020" stroke-width="0.9"/><path d="M573.0 528.8 L575.0 527.8 L577.0 529.3 L579.0 527.8 L581.0 529.3 L583.0 527.8 L585.0 529.3 L587.0 527.8 L589.0 529.3 L591.0 527.8 L593.0 529.3 L595.0 527.8 L597.0 529.3 L599.0 527.8 L601.0 529.3 L603.0 527.8 L605.0 529.3 L607.0 527.8 L609.0 529.3 L611.0 527.8 L613.0 529.3 L615.0 527.8 L617.0 529.3 L619.0 527.8 L621.0 529.3 L623.0 527.8 L625.0 529.3 L627.0 527.8 L629.0 529.3 L631.0 527.8 L633.0 529.3 L635.0 527.8 L637.0 529.3 L639.0 527.8 L641.0 529.3 L643.0 527.8 L645.0 529.3 L647.0 527.8 L649.0 529.3 L651.0 527.8 L653.0 529.3 L655.0 527.8 L657.0 529.3 L659.0 527.8 L661.0 529.3" fill="none" stroke="#2030e0" stroke-width="0.9"/></svg>
<!-- p7_bottom -->
<div style="position:absolute;left:0;top:0;width:1366px;height:768px;z-index:6"><div class="t" style="left:8px;top:711px;font-size:12px;line-height:12px;color:#fff;transform:scaleX(0.8541);transform-origin:0 0;">СТРАНИЦА 1 ИЗ 1</div>
<div class="t" style="left:117.5px;top:711px;font-size:12px;line-height:12px;color:#fff;transform:scaleX(0.8853);transform-origin:0 0;">ЧИСЛО СЛОВ: 259</div>
<div class="t" style="left:263.5px;top:711px;font-size:12px;line-height:12px;color:#fff;transform:scaleX(0.8255);transform-origin:0 0;">РУССКИЙ</div>
<div class="a" style="left:1112px;top:706px;width:38px;height:22px;background:#1f4e8f"></div>
<svg class="a" style="left:220px;top:706px" width="1146" height="22" viewBox="220 706 1146 22">
<path d="M232.5 710.5h4.5l2 1.5 2-1.5h4.5v11h-4.5l-2 1.5-2-1.5h-4.5z" fill="none" stroke="#fff" stroke-width="1"/>
<path d="M239 712v11" stroke="#fff" stroke-width="1"/>
<path d="M241.5 713l3.5 4M245 713l-3.5 4" stroke="#fff" stroke-width="1"/>
<g fill="none" stroke="#fff" stroke-width="1.1">
<path d="M1086.5 710.5h12.5v11.5h-12.5z"/><path d="M1092.75 710.5v12.5"/>
<path d="M1088 713h3.5M1088 715.5h3.5M1088 718h3.5M1094 713h3.5M1094 715.5h3.5M1094 718h3.5"/>
<rect x="1124.5" y="710.5" width="13.5" height="12.5"/>
<path d="M1126.5 713h9.5M1126.5 715.5h9.5M1126.5 718h9.5M1126.5 720.5h9.5"/>
<path d="M1170 719v-1" /><path d="M1168 721.5h-5.5v-11h12.5v5"/>
<path d="M1164.5 713h8M1164.5 715.5h4M1164.5 718h2.5"/>
</g>
<circle cx="1172" cy="719.5" r="3.8" fill="#fff"/>
<path d="M1170 717.5q1.5 1 1 2.5t2 2M1173.5 716.2q-0.5 1.5 1.5 2" fill="none" stroke="#2b579a" stroke-width="0.9"/>
<path d="M1193 716.5h6M1307 716.5h8M1311 712.5v8" stroke="#fff" stroke-width="2.2"/><path d="M1203 716.5h100" stroke="#fff" stroke-width="1.3"/>
<rect x="1251" y="711.5" width="4" height="10.5" fill="#fff"/>
</svg>
<div class="t" style="left:1330px;top:711px;font-size:12px;line-height:12px;color:#fff;transform:scaleX(0.8631);transform-origin:0 0;">100%</div>
<div class="a" style="left:0;top:728px;width:1366px;height:40px;background:linear-gradient(#1b2228,#0b0f12 40%,#080b0d)"></div>
<div class="a" style="left:0;top:729px;width:1366px;height:1px;background:#8a929a"></div>
<div class="a" style="left:122px;top:729px;width:58px;height:38px;background:linear-gradient(#e25b5f,#cf2f35 55%,#c6282e);border:1px solid #f0a0a2;border-radius:3px"></div>
<div class="a" style="left:308px;top:729px;width:58px;height:38px;background:linear-gradient(#4a5055,#262b2f 50%,#1a1e21);border:1px solid #5d6368;border-radius:3px"></div>
<div class="a" style="left:370px;top:729px;width:53px;height:38px;background:linear-gradient(#4a5055,#262b2f 50%,#1a1e21);border:1px solid #5d6368;border-radius:3px"></div>
<div class="a" style="left:432px;top:729px;width:58px;height:38px;background:linear-gradient(#4a5055,#262b2f 50%,#1a1e21);border:1px solid #5d6368;border-radius:3px"></div>
<div class="a" style="left:494px;top:729px;width:58px;height:38px;background:linear-gradient(#9a9fa3,#5b6166 50%,#3d4347);border:1px solid #c8cccf;border-radius:3px"></div>
<div class="a" style="left:556px;top:729px;width:58px;height:38px;background:linear-gradient(#4a5055,#262b2f 50%,#1a1e21);border:1px solid #5d6368;border-radius:3px"></div>
<div class="a" style="left:424px;top:729px;width:3px;height:38px;background:#30363b;border-radius:1px"></div>
<svg class="a" style="left:0;top:728px" width="1366" height="40" viewBox="0 728 1366 40">
<defs>
<radialGradient id="orb" cx="50%" cy="60%" r="60%"><stop offset="0" stop-color="#2e8fd0"/><stop offset="0.7" stop-color="#1763a6"/><stop offset="1" stop-color="#0a3566"/></radialGradient>
<linearGradient id="mic" x1="0" y1="0" x2="0" y2="1"><stop offset="0" stop-color="#e88a80"/><stop offset="0.55" stop-color="#f0301e"/><stop offset="1" stop-color="#c02a10"/></linearGradient>
</defs>
<circle cx="27" cy="748" r="18" fill="url(#orb)" stroke="#4b6e8c" stroke-width="1"/>
<ellipse cx="27" cy="740" rx="15" ry="9" fill="#cfe3f0" opacity="0.45"/>
<ellipse cx="27" cy="761" rx="11" ry="5" fill="#22d3ff" opacity="0.55"/>
<path d="M19 738.5 Q23.5 736.5 28.5 738 L27 746.5 Q22.5 745 17.5 747 Z" fill="#f05a24"/>
<path d="M29.5 738.5 Q34 740.5 39 738.5 L37.5 747 Q33 749 28 747 Z" fill="#8cc63f"/>
<path d="M17 748.5 Q22 746.5 26.5 748 L25 756.5 Q20.5 755 15.5 757 Z" fill="#3aa6e8"/>
<path d="M27.5 748.5 Q32 750.5 37 748.5 L35.5 757 Q31 759 26 757 Z" fill="#ffc22a"/>
<path d="M73.5 737 h9 l1.5 1.5 h20 v23 h-30.5 z" fill="#e9cf7e"/>
<rect x="77" y="736" width="4" height="2.5" fill="#19c13a"/><rect x="84" y="738" width="4" height="2.5" fill="#e03a2a"/><rect x="92" y="740" width="4" height="2.5" fill="#2f98ea"/>
<path d="M73.5 742 h31 v19.5 h-31 z" fill="#f6e7a8" stroke="#d9bf6a" stroke-width="0.8"/>
<path d="M77.5 763 v-11.5 h23 v11.5 h-5 v-7 h-13 v7 z" fill="#8fd0f2" stroke="#3e91c8" stroke-width="0.8"/>
<ellipse cx="151" cy="747" rx="11.5" ry="13" fill="#e8131f"/>
<ellipse cx="151" cy="747" rx="5" ry="9.5" fill="#d63c42"/>
<path d="M146 740 q5 -4 10 0" fill="none" stroke="#ff8a90" stroke-width="1.2" opacity="0.7"/>
<rect x="199" y="737" width="22" height="23.5" fill="#8cc4ea" stroke="#dff0fb" stroke-width="0.8"/>
<rect x="221" y="738.5" width="2" height="21.5" fill="#a9d6f3"/><rect x="223.3" y="739.5" width="2" height="20.5" fill="#7fbbe3"/>
<circle cx="209.4" cy="748.8" r="8.3" fill="#f37d12"/>
<path d="M206.5 744 L214.5 748.8 L206.5 753.6 Z" fill="#fff"/>
<circle cx="274.9" cy="747.5" r="14.5" fill="url(#mic)"/>
<path d="M260.5 751 A14.5 14.5 0 0 0 289.3 751 Z" fill="#6a2a12"/>
<rect x="271.5" y="735.5" width="7" height="15" rx="2.5" fill="#1e2224"/>
<path d="M275 750 v11 M269.5 754 h11" stroke="#1e2224" stroke-width="3.2"/>
<rect x="323.5" y="733.5" width="27" height="27" fill="#001e29" stroke="#31c5f0" stroke-width="2"/>
<text x="327" y="754" font-family="Liberation Sans" font-weight="bold" font-size="14" fill="#31c5f0">Ps</text>
<rect x="382.5" y="733.5" width="27" height="27" fill="#2d0604" stroke="#e8261b" stroke-width="2"/>
<path d="M388 755 q6-10 4-14 q-2-3 -1 3 q2 7 10 10 q4 1 2 -1 q-6-2 -15 2z" fill="none" stroke="#fff" stroke-width="1.1"/>
<rect x="447.5" y="733.5" width="27" height="27" fill="#001b2b" stroke="#add5ec" stroke-width="2"/>
<text x="451" y="754" font-family="Liberation Sans" font-weight="bold" font-size="14" fill="#add5ec">Lr</text>
<rect x="525.5" y="735.5" width="12" height="23" fill="#fff" stroke="#2b579a" stroke-width="1"/>
<path d="M528 739.5h7M528 742.5h7M528 745.5h7M528 748.5h7M528 751.5h7M528 754.5h7" stroke="#2b579a" stroke-width="1.2"/>
<path d="M508 737 L526 733.5 V761 L508 757.5 Z" fill="#2b579a"/>
<text x="510" y="753" font-family="Liberation Sans" font-weight="bold" font-size="11" fill="#fff">W</text>
<ellipse cx="584" cy="743" rx="11" ry="8" fill="#fff" stroke="#d42a2a" stroke-width="2.5"/>
<ellipse cx="583" cy="750" rx="9" ry="4" fill="#9a9a9a" opacity="0.8"/>
<path d="M578 736 L594 756 M590 736 L576 754" stroke="#cfd3d6" stroke-width="1.6"/>
<circle cx="598" cy="759" r="3.5" fill="none" stroke="#3aa2e8" stroke-width="2"/>
<circle cx="585" cy="761" r="3.5" fill="none" stroke="#3aa2e8" stroke-width="2"/>
<circle cx="1147" cy="746" r="7" fill="#1d3fbf" stroke="#c9ced4" stroke-width="1.5"/>
<text x="1143.3" y="750.5" font-family="Liberation Sans" font-weight="bold" font-size="11" fill="#fff">?</text>
<rect x="1168.5" y="738.5" width="6" height="3.5" fill="none" stroke="#fff" stroke-width="1"/>
<rect x="1166.5" y="740.5" width="6" height="3.5" fill="#0b0f12" stroke="#fff" stroke-width="1"/>
<path d="M1166.5 749.5h6l-3 3z" fill="#fff"/>
<path d="M1184 751h8l-4-3.5z" fill="#fff"/>
<g fill="#fff"><rect x="1205" y="752" width="2" height="2"/><rect x="1208" y="750" width="2" height="4"/><rect x="1211" y="748" width="2" height="6"/><rect x="1214" y="746" width="2" height="8"/><rect x="1217" y="744" width="2" height="10"/></g>
<path d="M1230.5 743.5h5v-1.5M1230.5 743.5v11h8v-3" fill="none" stroke="#fff" stroke-width="1.3"/>
<path d="M1236 746h5v3q0 2-2.5 2t-2.5-2zM1237.5 743.5v2.5M1239.5 743.5v2.5M1238.5 751v4" fill="#fff" stroke="#fff" stroke-width="1"/>
<path d="M1252 746h3l4-3.5v12.5l-4-3.5h-3z" fill="#fff"/>
<path d="M1261.5 746q1.5 2.5 0 5M1264 744q3 4.5 0 9" fill="none" stroke="#fff" stroke-width="1.1"/>
<rect x="1352.5" y="729.5" width="13" height="38" fill="#1b1f22" stroke="#5a5f63" stroke-width="1"/>
</svg>
<div class="t" style="left:1117.5px;top:740px;font-size:12px;line-height:12px;color:#e8e8e8;transform:scaleX(0.8360);transform-origin:0 0;">RU</div>
<div class="t" style="left:1300px;top:735.5px;font-size:12px;line-height:12px;color:#fff;transform:scaleX(0.8658);transform-origin:0 0;">12:31</div>
<div class="t" style="left:1286px;top:752px;font-size:12px;line-height:12px;color:#fff;transform:scaleX(0.8824);transform-origin:0 0;">26.04.2018</div></div>
</body></html>
